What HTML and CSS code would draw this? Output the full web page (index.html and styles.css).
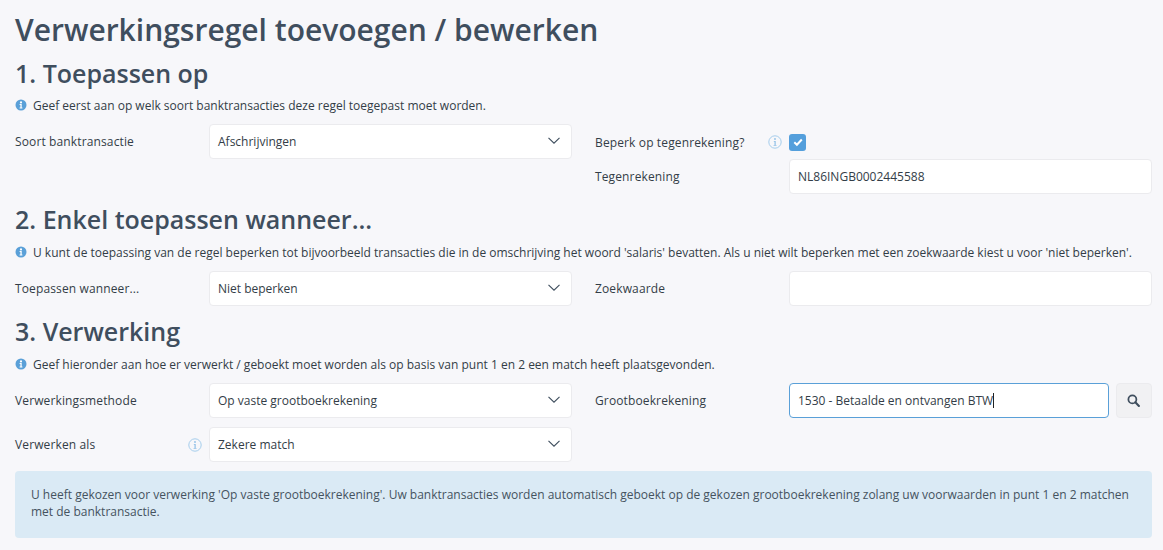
FILE: index.html
```html
<!DOCTYPE html>
<html lang="nl">
<head>
<meta charset="utf-8">
<title>Verwerkingsregel</title>
<link rel="stylesheet" href="styles.css">
</head>
<body>
<svg class="defs" width="0" height="0" aria-hidden="true">
  <symbol id="chev" viewBox="0 0 12 7"><path d="M.5.8 6 6.2 11.500.8" fill="none" stroke="currentColor" stroke-width="1.1"/></symbol>
  <symbol id="info-solid" viewBox="0 0 12 12"><circle cx="6" cy="6" r="5.500" fill="#5aa0d8"/><circle cx="6" cy="3.400" r="1.100" fill="#fff"/><path d="M4.600 5.100h2.100v3.300h.7v1H4.600v-1h.8V6.100h-.8z" fill="#fff"/></symbol>
  <symbol id="info-line" viewBox="0 0 14 14"><circle cx="7" cy="7" r="6.200" fill="none" stroke="#a5cdec" stroke-width="1"/><circle cx="7" cy="4" r=".9" fill="#8fbfe6"/><path d="M5.800 6h1.900v4h.8v.8H5.600V10h.9V6.800h-.7z" fill="#8fbfe6"/></symbol>
</svg>
<main class="page">
  <h1 class="title">Verwerkingsregel toevoegen / bewerken</h1>

  <h2 class="section section-first">1. Toepassen op</h2>
  <p class="hint"><svg class="hint-icon"><use href="#info-solid"/></svg>Geef eerst aan op welk soort banktransacties deze regel toegepast moet worden.</p>
  <div class="grid">
    <div class="row row-top">
      <span class="label">Soort banktransactie</span>
      <div class="field select">Afschrijvingen<svg class="chev"><use href="#chev"/></svg></div>
    </div>
    <div class="stack">
      <div class="row row-check">
        <span class="label">Beperk op tegenrekening?<svg class="help"><use href="#info-line"/></svg></span>
        <span class="check"><svg viewBox="0 0 12 12" width="12" height="12"><path d="M2.300 6.300 4.900 8.800 9.800 3.500" fill="none" stroke="#fff" stroke-width="2"/></svg></span>
      </div>
      <div class="row">
        <span class="label">Tegenrekening</span>
        <div class="field">NL86INGB0002445588</div>
      </div>
    </div>
  </div>

  <h2 class="section section-next">2. Enkel toepassen wanneer...</h2>
  <p class="hint"><svg class="hint-icon"><use href="#info-solid"/></svg>U kunt de toepassing van de regel beperken tot bijvoorbeeld transacties die in de omschrijving het woord 'salaris' bevatten. Als u niet wilt beperken met een zoekwaarde kiest u voor 'niet beperken'.</p>
  <div class="grid">
    <div class="row">
      <span class="label">Toepassen wanneer...</span>
      <div class="field select">Niet beperken<svg class="chev"><use href="#chev"/></svg></div>
    </div>
    <div class="row">
      <span class="label">Zoekwaarde</span>
      <div class="field"></div>
    </div>
  </div>

  <h2 class="section section-next">3. Verwerking</h2>
  <p class="hint"><svg class="hint-icon"><use href="#info-solid"/></svg>Geef hieronder aan hoe er verwerkt / geboekt moet worden als op basis van punt 1 en 2 een match heeft plaatsgevonden.</p>
  <div class="grid">
    <div class="stack stack-gap">
      <div class="row">
        <span class="label">Verwerkingsmethode</span>
        <div class="field select">Op vaste grootboekrekening<svg class="chev"><use href="#chev"/></svg></div>
      </div>
      <div class="row">
        <span class="label">Verwerken als<svg class="help"><use href="#info-line"/></svg></span>
        <div class="field select">Zekere match<svg class="chev"><use href="#chev"/></svg></div>
      </div>
    </div>
    <div class="row row-top">
      <span class="label">Grootboekrekening</span>
      <div class="combo">
        <div class="field focus">1530 - Betaalde en ontvangen BTW<span class="caret"></span></div>
        <button class="search" type="button" aria-label="Zoeken"><svg viewBox="0 0 14 14" width="13" height="13"><circle cx="5.800" cy="5.800" r="4.300" fill="none" stroke="#3f4e5e" stroke-width="1.900"/><path d="m9 9 3.800 3.800" stroke="#3f4e5e" stroke-width="2.300" stroke-linecap="round"/></svg></button>
      </div>
    </div>
  </div>

  <div class="alert">U heeft gekozen voor verwerking 'Op vaste grootboekrekening'. Uw banktransacties worden automatisch geboekt op de gekozen grootboekrekening zolang uw voorwaarden in punt 1 en 2 matchen met de banktransactie.</div>
</main>
</body>
</html>
```
FILE: styles.css
```css
* { box-sizing: border-box; }
html, body { margin: 0; height: 100%; }
body {
  background: #f7f7fa;
  color: #333d47;
  font-family: "Open Sans", sans-serif;
  font-size: 12px;
  overflow: hidden;
}
.defs { position: absolute; }
.page { padding: 8px 11px 0 15px; }
.title {
  margin: 0;
  color: #3f4e5e;
  font-size: 30px;
  font-weight: 600;
  line-height: 44px;
}
.section {
  margin: 0;
  color: #3f4e5e;
  font-size: 25px;
  font-weight: 600;
  line-height: 32px;
}
.section-first { margin-top: 5px; }
.section-next { margin-top: 9px; }
.hint {
  display: flex;
  align-items: center;
  margin: 7px 0 10px;
  height: 18px;
  white-space: nowrap;
}
.section-next + .hint { margin-top: 8px; }
.hint-icon { width: 12px; height: 12px; margin-right: 6px; flex: none; }
.grid {
  display: grid;
  grid-template-columns: 557px 557px;
  column-gap: 23px;
}
.row {
  display: grid;
  grid-template-columns: 194px 363px;
  align-items: center;
}
.row-top { align-self: start; }
.row-check { height: 35px; padding-top: 1px; }
.stack { display: flex; flex-direction: column; }
.stack-gap { gap: 9px; }
.label {
  display: flex;
  align-items: center;
  justify-content: space-between;
  padding-right: 7px;
  letter-spacing: .13px;
}
.help { width: 14px; height: 14px; }
.field {
  position: relative;
  display: flex;
  align-items: center;
  height: 35px;
  padding: 0 8px;
  background: #fff;
  border: 1px solid #ebebee;
  border-radius: 4px;
  white-space: nowrap;
  flex: 1;
}
.chev { position: absolute; right: 11px; top: 12px; width: 12px; height: 7px; color: #3f4e5e; }
.check {
  display: flex;
  align-items: center;
  justify-content: center;
  width: 17px;
  height: 17px;
  background: #549fdc;
  border-radius: 3px;
}
.combo { display: flex; gap: 7px; }
.focus { border-color: #5aa0d8; }
.caret { width: 1px; height: 15px; background: #222; }
.search {
  display: flex;
  align-items: center;
  justify-content: center;
  width: 36px;
  height: 35px;
  padding: 0 1px 0 0;
  background: #f1f1f3;
  border: 1px solid #ebebee;
  border-radius: 4px;
}
.alert {
  margin-top: 9px;
  padding: 15px 16px;
  height: 67px;
  background: #daeaf5;
  border-radius: 4px;
  color: #45535f;
  line-height: 17px;
}
```
